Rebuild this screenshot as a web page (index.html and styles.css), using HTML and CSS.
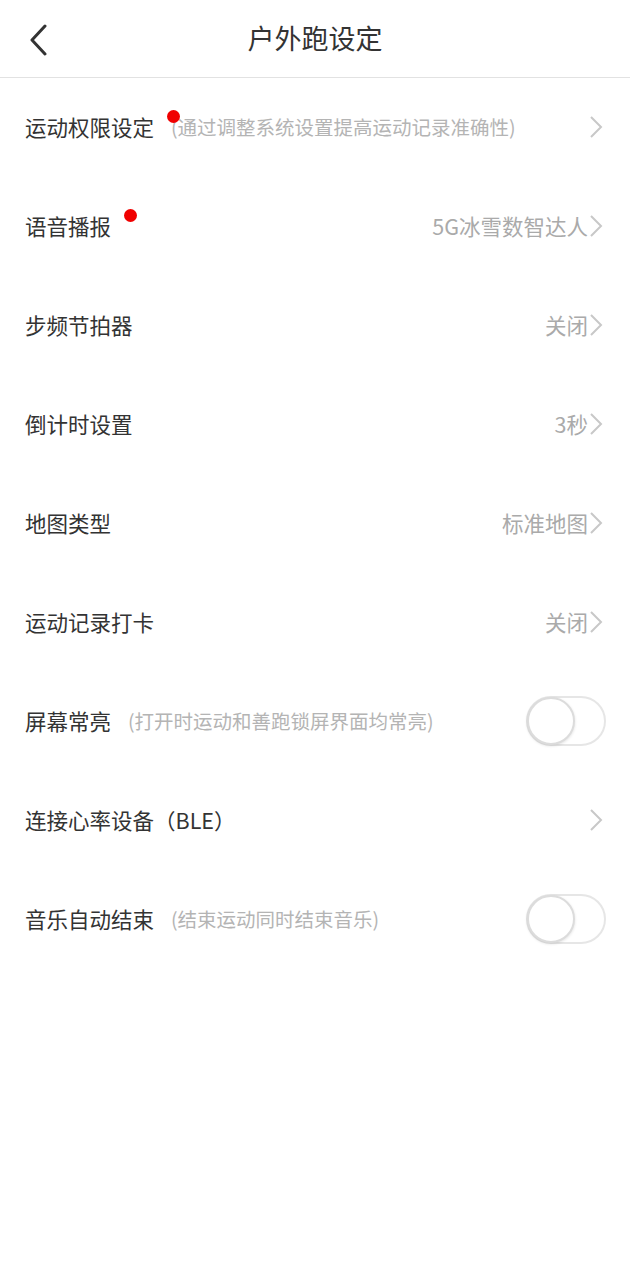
FILE: index.html
```html
<!DOCTYPE html>
<html lang="zh-CN">
<head>
    <meta charset="UTF-8">
    <meta name="viewport" content="width=device-width, initial-scale=1.0">
    <title>户外跑设定</title>
    <link rel="stylesheet" href="styles.css">
</head>
<body>
    <header class="top-bar">
        <svg class="back-icon" width="20" height="32" viewBox="0 0 20 32">
            <path d="M17 2 L4 16 L17 30" fill="none" stroke="#333" stroke-width="3" stroke-linecap="round" stroke-linejoin="round"/>
        </svg>
        <h1 class="page-title">户外跑设定</h1>
    </header>

    <ul class="settings">
        <li class="row">
            <span class="label has-dot">运动权限设定</span>
            <span class="hint">(通过调整系统设置提高运动记录准确性)</span>
            <span class="value"></span>
            <svg class="chevron" width="14" height="24" viewBox="0 0 14 24"><path d="M2 2 L12 12 L2 22" fill="none" stroke="#c8c8c8" stroke-width="2"/></svg>
        </li>
        <li class="row">
            <span class="label has-dot">语音播报</span>
            <span class="value">5G冰雪数智达人</span>
            <svg class="chevron" width="14" height="24" viewBox="0 0 14 24"><path d="M2 2 L12 12 L2 22" fill="none" stroke="#c8c8c8" stroke-width="2"/></svg>
        </li>
        <li class="row">
            <span class="label">步频节拍器</span>
            <span class="value">关闭</span>
            <svg class="chevron" width="14" height="24" viewBox="0 0 14 24"><path d="M2 2 L12 12 L2 22" fill="none" stroke="#c8c8c8" stroke-width="2"/></svg>
        </li>
        <li class="row">
            <span class="label">倒计时设置</span>
            <span class="value">3秒</span>
            <svg class="chevron" width="14" height="24" viewBox="0 0 14 24"><path d="M2 2 L12 12 L2 22" fill="none" stroke="#c8c8c8" stroke-width="2"/></svg>
        </li>
        <li class="row">
            <span class="label">地图类型</span>
            <span class="value">标准地图</span>
            <svg class="chevron" width="14" height="24" viewBox="0 0 14 24"><path d="M2 2 L12 12 L2 22" fill="none" stroke="#c8c8c8" stroke-width="2"/></svg>
        </li>
        <li class="row">
            <span class="label">运动记录打卡</span>
            <span class="value">关闭</span>
            <svg class="chevron" width="14" height="24" viewBox="0 0 14 24"><path d="M2 2 L12 12 L2 22" fill="none" stroke="#c8c8c8" stroke-width="2"/></svg>
        </li>
        <li class="row">
            <span class="label">屏幕常亮</span>
            <span class="hint">(打开时运动和善跑锁屏界面均常亮)</span>
            <span class="value"></span>
            <span class="switch"><span class="knob"></span></span>
        </li>
        <li class="row">
            <span class="label">连接心率设备（BLE）</span>
            <span class="value"></span>
            <svg class="chevron" width="14" height="24" viewBox="0 0 14 24"><path d="M2 2 L12 12 L2 22" fill="none" stroke="#c8c8c8" stroke-width="2"/></svg>
        </li>
        <li class="row">
            <span class="label">音乐自动结束</span>
            <span class="hint">(结束运动同时结束音乐)</span>
            <span class="value"></span>
            <span class="switch"><span class="knob"></span></span>
        </li>
    </ul>
</body>
</html>
```

FILE: styles.css
```css
/* General */
body {
    margin: 0;
    padding: 0;
    background-color: #ffffff;
    font-family: "Noto Sans CJK SC", "Noto Sans", sans-serif;
    color: #333;
}

/* Top bar */
.top-bar {
    position: relative;
    height: 78px;
    display: flex;
    align-items: center;
    justify-content: center;
    border-bottom: 1px solid #e2e2e2;
    box-sizing: border-box;
    padding-bottom: 2px;
}

.back-icon {
    position: absolute;
    left: 28px;
    top: 24px;
}

.page-title {
    margin: 0;
    font-size: 27px;
    font-weight: normal;
    color: #333;
}

/* Settings list */
.settings {
    list-style: none;
    margin: 0;
    padding: 0;
    padding-top: 1px;
}

.row {
    height: 99px;
    box-sizing: border-box;
    display: flex;
    align-items: center;
    padding: 0 27px 4px 25px;
}

.label {
    position: relative;
    font-size: 21.5px;
    color: #333;
    white-space: nowrap;
}

.has-dot::after {
    content: "";
    position: absolute;
    right: -26px;
    top: -1px;
    width: 13px;
    height: 13px;
    border-radius: 50%;
    background-color: #f00000;
}

.hint {
    margin-left: 17px;
    font-size: 19.5px;
    color: #b4b4b4;
    white-space: nowrap;
}

.value {
    flex: 1;
    text-align: right;
    font-size: 21.5px;
    color: #aaaaaa;
    white-space: nowrap;
}

.chevron {
    margin-left: 1px;
}

/* Switch */
.switch {
    position: relative;
    width: 76px;
    height: 46px;
    border: 2px solid #e6e6e6;
    border-radius: 25px;
    background-color: #ffffff;
    margin-right: -3px;
}

.knob {
    position: absolute;
    left: -1px;
    top: -1px;
    width: 44px;
    height: 44px;
    border: 2px solid #dcdcdc;
    border-radius: 50%;
    background-color: #ffffff;
    box-shadow: 0 1px 3px rgba(0, 0, 0, 0.12);
}
```
